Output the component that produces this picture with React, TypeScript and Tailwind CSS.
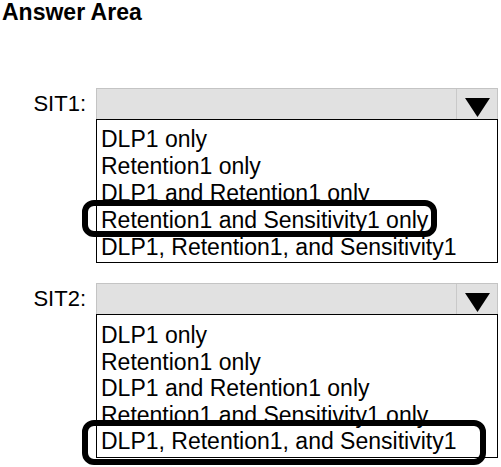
const OPTIONS = [
  "DLP1 only",
  "Retention1 only",
  "DLP1 and Retention1 only",
  "Retention1 and Sensitivity1 only",
  "DLP1, Retention1, and Sensitivity1",
];

type DropProps = {
  label: string;
  selected: number;
  listClass: string;
  ovalClass: string;
};

const Dropdown = ({ label, selected, listClass, ovalClass }: DropProps) => {
  return (
    <div className="flex">
      <div className="w-[96px] pr-[10px] text-right text-[22px] leading-[31px]">{label}</div>
      <div className="w-[402px]">
        <div className="h-[31px] flex bg-[#e1e1e1] border-t border-l border-r border-[#c4c4c4]">
          <div className="flex-1" />
          <div className="w-[41px] border-l border-[#c9c9c9] flex justify-center items-end pb-[2px]">
            <svg width="25" height="19" viewBox="0 0 25 19">
              <polygon points="0,0 25,0 12.5,19" fill="#000" />
            </svg>
          </div>
        </div>
        <ul className={`h-[144px] border border-black pl-[4px] text-[23px] ${listClass}`}>
          {OPTIONS.map((opt, i) => (
            <li key={opt} className="whitespace-nowrap">
              <span className="relative inline-block">
                {opt}
                {i === selected && (
                  <span className={`absolute border-[6px] border-black rounded-[12px] ${ovalClass}`} />
                )}
              </span>
            </li>
          ))}
        </ul>
      </div>
    </div>
  );
};

const App = () => {
  return (
    <div className="w-[501px] h-[467px] bg-white text-black overflow-hidden font-['Liberation_Sans',Arial,sans-serif]">
      <h1 className="pl-[2px] text-[23px] font-bold leading-[24px]">Answer Area</h1>
      <div className="mt-[64px]">
        <Dropdown
          label="SIT1:"
          selected={3}
          listClass="pt-[6px] leading-[27px]"
          ovalClass="-left-[19px] -right-[9px] -top-[7px] -bottom-[3px]"
        />
      </div>
      <div className="mt-[20px]">
        <Dropdown
          label="SIT2:"
          selected={4}
          listClass="pt-[7px] leading-[26.5px]"
          ovalClass="-left-[19px] -right-[30px] -top-[8px] -bottom-[10px]"
        />
      </div>
    </div>
  );
};

export default App;
